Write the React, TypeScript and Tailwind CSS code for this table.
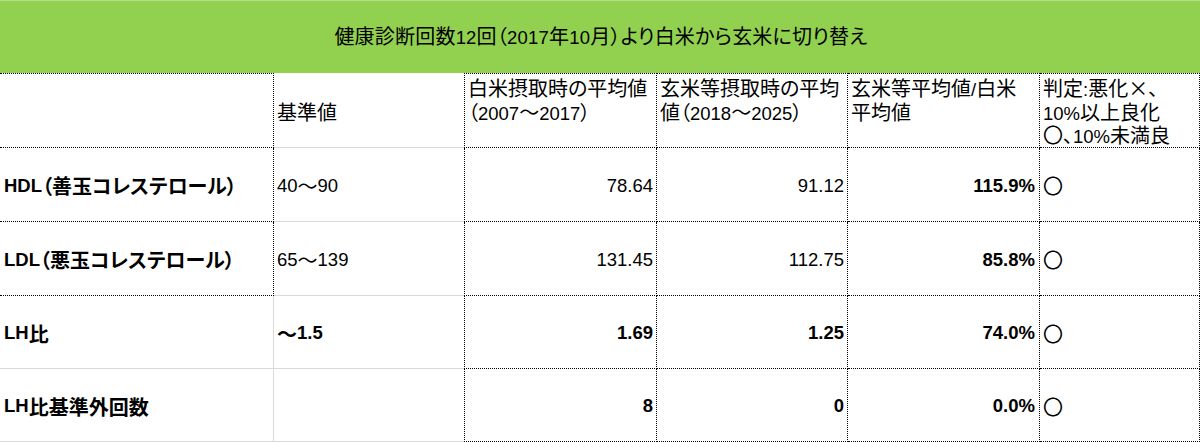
import React from "react";

function T({ s }: { s: string }) {
  const parts = s.split(/([\x20-\x7e]+)/);
  return (
    <>
      {parts.map((p, i) =>
        i % 2 === 1 ? (
          <span key={i} className="font-['Liberation_Sans',sans-serif] text-[18.5px] leading-none">
            {p}
          </span>
        ) : (
          <React.Fragment key={i}>{p}</React.Fragment>
        )
      )}
    </>
  );
}

type Row = {
  label: string;
  std: string;
  stdBold: boolean;
  c: string;
  d: string;
  valBold: boolean;
  e: string;
  f: string;
  h: string;
  aSolid: boolean;
};

const rows: Row[] = [
  { label: "HDL（善玉コレステロール）", std: "40～90", stdBold: false, c: "78.64", d: "91.12", valBold: false, e: "115.9%", f: "〇", h: "h-[74px]", aSolid: false },
  { label: "LDL（悪玉コレステロール）", std: "65～139", stdBold: false, c: "131.45", d: "112.75", valBold: false, e: "85.8%", f: "〇", h: "h-[74px]", aSolid: false },
  { label: "LH比", std: "～1.5", stdBold: true, c: "1.69", d: "1.25", valBold: true, e: "74.0%", f: "〇", h: "h-[73px]", aSolid: true },
  { label: "LH比基準外回数", std: "", stdBold: false, c: "8", d: "0", valBold: true, e: "0.0%", f: "〇", h: "h-[73px]", aSolid: true },
];

function Line({ children }: { children: React.ReactNode }) {
  return <div className="h-[23.5px] leading-[23.5px] whitespace-nowrap">{children}</div>;
}

export default function App() {
  return (
    <div className="w-[1200px] h-[442px] overflow-hidden bg-white text-black font-['Noto_Sans_CJK_JP','Liberation_Sans',sans-serif] [font-feature-settings:'palt'] text-[20px]">
      <div className="h-[73px] bg-[#92d050] border-t border-[#b3dd8a] flex items-center justify-center pb-[1px] pl-[2px]">
        <span className="text-[20px] leading-none tracking-[0.2px]">
          <T s="健康診断回数12回（2017年10月）より白米から玄米に切り替え" />
        </span>
      </div>

      {/* header row */}
      <div className="flex h-[75px]">
        <div className="w-[274px] border-t border-r border-b border-dotted border-black" />
        <div className="w-[190px] border-t border-t-white border-b border-b-[#d9d9d9] flex items-center pl-[3px] pt-[2px] leading-[24px]">
          基準値
        </div>
        <div className="w-[193px] border border-dotted border-black pl-[3px] pt-[2px] overflow-hidden">
          <Line>白米摂取時の平均値</Line>
          <Line>
            <T s="（2007～2017）" />
          </Line>
        </div>
        <div className="w-[191px] border-t border-r border-b border-dotted border-black pl-[3px] pt-[2px] overflow-hidden">
          <Line>玄米等摂取時の平均</Line>
          <Line>
            <T s="値（2018～2025）" />
          </Line>
        </div>
        <div className="w-[192px] border-t border-r border-b border-dotted border-black pl-[3px] pt-[2px] overflow-hidden">
          <Line>
            <T s="玄米等平均値/白米" />
          </Line>
          <Line>平均値</Line>
        </div>
        <div className="w-[160px] border-t border-r border-b border-dotted border-black pl-[3px] pt-[2px] overflow-hidden">
          <Line>
            <T s="判定:" />悪化×、
          </Line>
          <Line>
            <T s="10%" />以上良化
          </Line>
          <Line>
            〇、<T s="10%" />未満良
          </Line>
        </div>
      </div>

      {rows.map((r, i) => (
        <div key={i} className={`flex ${r.h}`}>
          <div
            className={
              r.aSolid
                ? "w-[274px] border-r border-b border-solid border-[#d9d9d9] flex items-center pl-[4px] pt-[3px] font-bold whitespace-nowrap"
                : "w-[274px] border-r border-b border-dotted border-black flex items-center pl-[4px] pt-[3px] font-bold whitespace-nowrap"
            }
          >
            <T s={r.label} />
          </div>
          <div
            className={
              r.stdBold
                ? "w-[190px] border-b border-[#d9d9d9] flex items-center pl-[3px] pt-[3px] font-bold"
                : "w-[190px] border-b border-[#d9d9d9] flex items-center pl-[3px] pt-[3px]"
            }
          >
            <T s={r.std} />
          </div>
          <div
            className={
              r.valBold
                ? "w-[193px] border-l border-r border-b border-dotted border-black flex items-center justify-end pr-[3px] pt-[3px] font-bold"
                : "w-[193px] border-l border-r border-b border-dotted border-black flex items-center justify-end pr-[3px] pt-[3px]"
            }
          >
            <T s={r.c} />
          </div>
          <div
            className={
              r.valBold
                ? "w-[191px] border-r border-b border-dotted border-black flex items-center justify-end pr-[3px] pt-[3px] font-bold"
                : "w-[191px] border-r border-b border-dotted border-black flex items-center justify-end pr-[3px] pt-[3px]"
            }
          >
            <T s={r.d} />
          </div>
          <div className="w-[192px] border-r border-b border-dotted border-black flex items-center justify-end pr-[4px] pt-[3px] font-bold">
            <T s={r.e} />
          </div>
          <div className="w-[160px] border-r border-b border-dotted border-black flex items-center pl-[3px] pt-[3px]">
            {r.f}
          </div>
        </div>
      ))}
    </div>
  );
}
